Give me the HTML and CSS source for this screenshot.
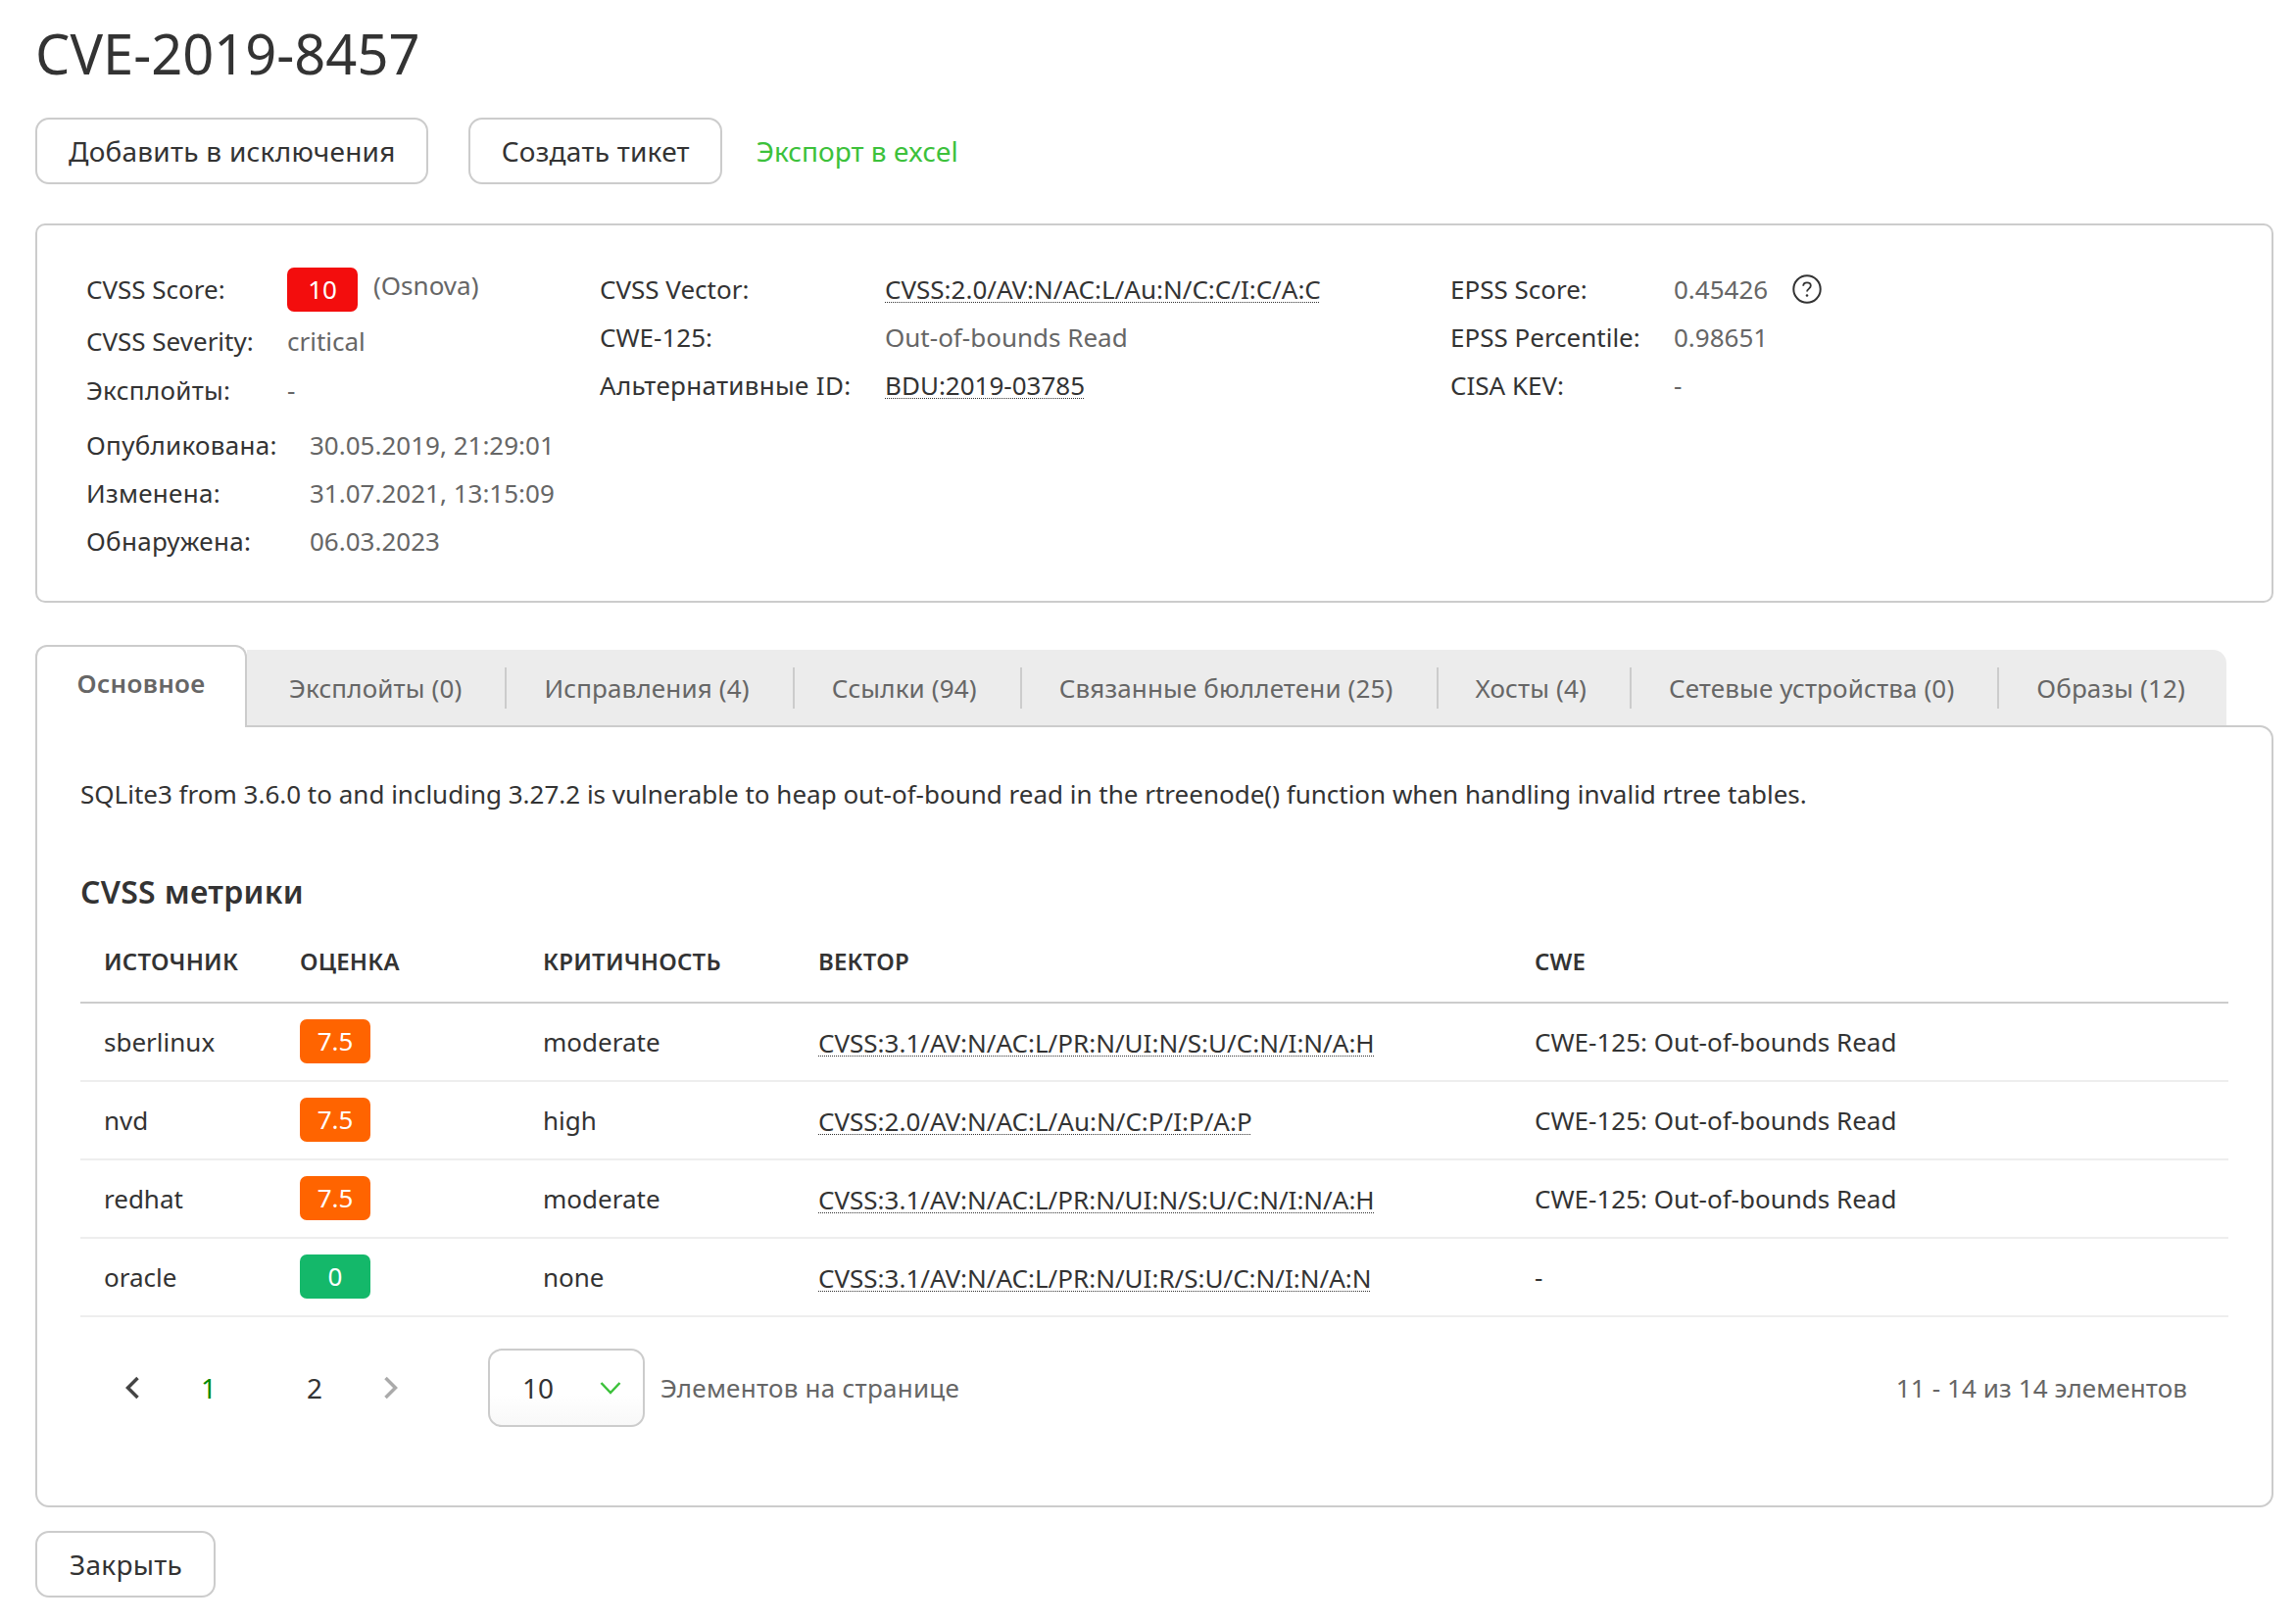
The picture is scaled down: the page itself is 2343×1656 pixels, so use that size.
FILE: index.html
```html
<!DOCTYPE html>
<html lang="ru">
<head>
    <meta charset="UTF-8">
    <title>CVE-2019-8457</title>
    <link rel="stylesheet" href="styles.css">
</head>
<body>
    <h1 class="page-title">CVE-2019-8457</h1>

    <div class="actions">
        <button class="btn">Добавить в исключения</button>
        <button class="btn">Создать тикет</button>
        <a class="export-link">Экспорт в excel</a>
    </div>

    <section class="info-panel">
        <div class="info-col info-col-left">
            <div class="info-grid score-grid">
                <span class="label">CVSS Score:</span>
                <span class="value score-value"><span class="badge badge-red">10</span><span class="source">(Osnova)</span></span>
                <span class="label">CVSS Severity:</span>
                <span class="value">critical</span>
                <span class="label cyr">Эксплойты:</span>
                <span class="value">-</span>
            </div>
            <div class="info-grid date-grid">
                <span class="label cyr">Опубликована:</span>
                <span class="value">30.05.2019, 21:29:01</span>
                <span class="label cyr">Изменена:</span>
                <span class="value">31.07.2021, 13:15:09</span>
                <span class="label cyr">Обнаружена:</span>
                <span class="value">06.03.2023</span>
            </div>
        </div>
        <div class="info-col info-col-mid">
            <div class="info-grid mid-grid">
                <span class="label">CVSS Vector:</span>
                <span class="value"><a class="link">CVSS:2.0/AV:N/AC:L/Au:N/C:C/I:C/A:C</a></span>
                <span class="label">CWE-125:</span>
                <span class="value">Out-of-bounds Read</span>
                <span class="label cyr">Альтернативные ID:</span>
                <span class="value"><a class="link">BDU:2019-03785</a></span>
            </div>
        </div>
        <div class="info-col info-col-right">
            <div class="info-grid epss-grid">
                <span class="label">EPSS Score:</span>
                <span class="value epss-value">0.45426
                    <svg class="help-icon" viewBox="0 0 30 30" width="30" height="30">
                        <circle cx="15" cy="15" r="13.7" fill="none" stroke="#333" stroke-width="2"/>
                        <path d="M11.200 11.800c0-2.200 1.600-3.500 3.800-3.500s3.800 1.300 3.800 3.300c0 3-3.800 3-3.800 6" fill="none" stroke="#333" stroke-width="1.800"/>
                        <circle cx="15" cy="21.500" r="1.300" fill="#333"/>
                    </svg>
                </span>
                <span class="label">EPSS Percentile:</span>
                <span class="value">0.98651</span>
                <span class="label">CISA KEV:</span>
                <span class="value">-</span>
            </div>
        </div>
    </section>

    <div class="tabs">
        <div class="tab tab-active">Основное</div>
        <div class="tab-bar">
            <div class="tab">Эксплойты (0)</div>
            <div class="tab">Исправления (4)</div>
            <div class="tab">Ссылки (94)</div>
            <div class="tab">Связанные бюллетени (25)</div>
            <div class="tab">Хосты (4)</div>
            <div class="tab">Сетевые устройства (0)</div>
            <div class="tab">Образы (12)</div>
        </div>
    </div>

    <section class="tab-panel">
        <p class="description">SQLite3 from 3.6.0 to and including 3.27.2 is vulnerable to heap out-of-bound read in the rtreenode() function when handling invalid rtree tables.</p>
        <h2 class="section-title">CVSS метрики</h2>

        <table class="metrics">
            <thead>
                <tr>
                    <th class="col-source">Источник</th>
                    <th class="col-score">Оценка</th>
                    <th class="col-severity">Критичность</th>
                    <th class="col-vector">Вектор</th>
                    <th>CWE</th>
                </tr>
            </thead>
            <tbody>
                <tr>
                    <td>sberlinux</td>
                    <td><span class="badge badge-orange">7.5</span></td>
                    <td>moderate</td>
                    <td><a class="link">CVSS:3.1/AV:N/AC:L/PR:N/UI:N/S:U/C:N/I:N/A:H</a></td>
                    <td>CWE-125: Out-of-bounds Read</td>
                </tr>
                <tr>
                    <td>nvd</td>
                    <td><span class="badge badge-orange">7.5</span></td>
                    <td>high</td>
                    <td><a class="link">CVSS:2.0/AV:N/AC:L/Au:N/C:P/I:P/A:P</a></td>
                    <td>CWE-125: Out-of-bounds Read</td>
                </tr>
                <tr>
                    <td>redhat</td>
                    <td><span class="badge badge-orange">7.5</span></td>
                    <td>moderate</td>
                    <td><a class="link">CVSS:3.1/AV:N/AC:L/PR:N/UI:N/S:U/C:N/I:N/A:H</a></td>
                    <td>CWE-125: Out-of-bounds Read</td>
                </tr>
                <tr>
                    <td>oracle</td>
                    <td><span class="badge badge-green">0</span></td>
                    <td>none</td>
                    <td><a class="link">CVSS:3.1/AV:N/AC:L/PR:N/UI:R/S:U/C:N/I:N/A:N</a></td>
                    <td>-</td>
                </tr>
            </tbody>
        </table>

        <div class="pager">
            <svg class="pager-arrow" viewBox="0 0 16 24" width="16" height="24"><path d="M13.500 2 3.500 12l10 10" fill="none" stroke="#444" stroke-width="3.500"/></svg>
            <span class="page-num page-current">1</span>
            <span class="page-num">2</span>
            <svg class="pager-arrow pager-next" viewBox="0 0 16 24" width="16" height="24"><path d="M2.500 2 12.500 12l-10 10" fill="none" stroke="#aaa" stroke-width="3.500"/></svg>
            <div class="page-size">
                <span>10</span>
                <svg viewBox="0 0 22 14" width="22" height="14"><path d="M1.500 2 11 12l9.500-10" fill="none" stroke="#3cc13b" stroke-width="2.500"/></svg>
            </div>
            <span class="pager-note">Элементов на странице</span>
            <span class="pager-total">11 - 14 из 14 элементов</span>
        </div>
    </section>

    <button class="btn btn-close">Закрыть</button>
</body>
</html>
```

FILE: styles.css
```css
body {
    font-family: "Noto Sans", Arial, sans-serif;
    font-size: 26px;
    color: #333;
    margin: 0;
    padding: 0 23px 26px 36px;
    background-color: #fff;
}

.page-title {
    font-size: 56px;
    font-weight: 400;
    line-height: 74px;
    margin: 17px 0 29px;
}

.actions {
    display: flex;
    align-items: center;
    height: 68px;
}

.btn {
    font-family: inherit;
    font-size: 28px;
    letter-spacing: 0.25px;
    color: #333;
    height: 68px;
    padding: 0 31px 0 32px;
    background: #fff;
    border: 2px solid #ccc;
    border-radius: 14px;
    margin-right: 41px;
}

.export-link {
    color: #3cc13b;
    font-size: 28px;
    margin-left: -6px;
}

.info-panel {
    display: flex;
    height: 387px;
    box-sizing: border-box;
    margin-top: 40px;
    padding: 42px 0 0 50px;
    border: 2px solid #ccc;
    border-radius: 10px;
}

.info-col-left {
    width: 524px;
}

.info-col-mid {
    width: 868px;
}

.info-grid {
    display: grid;
    align-items: center;
}

.label {
    white-space: nowrap;
}

.cyr {
    letter-spacing: 0.3px;
}

.value {
    color: #666;
    white-space: nowrap;
}

.score-grid {
    grid-template-columns: 205px 1fr;
    grid-template-rows: 46px 60px 40px;
}

.date-grid {
    grid-template-columns: 228px 1fr;
    grid-auto-rows: 49px;
    margin-top: 11px;
}

.mid-grid {
    grid-template-columns: 291px 1fr;
    grid-auto-rows: 49px;
    margin-top: -2px;
}

.epss-grid {
    grid-template-columns: 228px 1fr;
    grid-auto-rows: 49px;
    margin-top: -2px;
}

.score-value,
.epss-value {
    display: flex;
    align-items: center;
}

.source {
    margin: -8px 0 0 16px;
}

.help-icon {
    margin-left: 25px;
}

.link {
    color: #333;
    text-decoration: underline dotted 1px;
    text-underline-offset: 3px;
}

.badge {
    display: inline-block;
    width: 72px;
    height: 45px;
    line-height: 45px;
    text-align: center;
    vertical-align: middle;
    color: #fff;
    border-radius: 7px;
}

.badge-red {
    background-color: #f30d0d;
}

.badge-orange {
    background-color: #ff6400;
    margin-top: -2px;
}

.badge-green {
    background-color: #14b86a;
    margin-top: -2px;
}

.tabs {
    display: flex;
    align-items: flex-end;
    height: 82px;
    margin-top: 43px;
    margin-right: 48px;
}

.tab-active {
    flex-shrink: 0;
    box-sizing: border-box;
    width: 216px;
    height: 84px;
    margin-bottom: -2px;
    padding-top: 19px;
    text-align: center;
    font-size: 26px;
    font-weight: 600;
    letter-spacing: 0.3px;
    color: #666;
    background: #fff;
    border: 2px solid #ccc;
    border-bottom: none;
    border-radius: 12px 12px 0 0;
    position: relative;
    z-index: 1;
}

.tab-bar {
    flex: 1;
    min-width: 0;
    display: flex;
    align-items: center;
    height: 77px;
    box-sizing: border-box;
    background-color: #ececec;
    border-radius: 0 14px 0 0;
}

.tab-bar .tab {
    color: #666;
    white-space: nowrap;
    letter-spacing: 0.14px;
    padding: 0 44px 0 38px;
    border-left: 2px solid #ccc;
    line-height: 42px;
}

.tab-bar .tab:first-child {
    padding-left: 43px;
    border-left: none;
}

.tab-panel {
    box-sizing: border-box;
    height: 798px;
    padding: 48px 44px 0 44px;
    border: 2px solid #ccc;
    border-radius: 0 14px 14px 14px;
}

.description {
    margin: 0;
    line-height: 40px;
}

.section-title {
    font-size: 32px;
    font-weight: 600;
    letter-spacing: 0.3px;
    line-height: 44px;
    margin: 58px 0 0;
}

.metrics {
    width: 100%;
    table-layout: fixed;
    border-collapse: collapse;
    margin-top: 13px;
}

.metrics th {
    box-sizing: border-box;
    text-align: left;
    font-size: 24px;
    font-weight: 600;
    letter-spacing: 0.2px;
    text-transform: uppercase;
    height: 78px;
    padding: 0 24px 6px;
    border-bottom: 2px solid #ccc;
}

.metrics td {
    height: 78px;
    padding: 0 24px;
    border-bottom: 2px solid #eee;
    white-space: nowrap;
}

.metrics .link {
    display: inline-block;
    padding-top: 2px;
}

.col-source {
    width: 200px;
}

.col-score {
    width: 248px;
}

.col-severity {
    width: 281px;
}

.col-vector {
    width: 731px;
}

.pager {
    display: flex;
    align-items: center;
    height: 78px;
    margin-top: 33px;
    padding: 0 42px 0 45px;
}

.page-num {
    width: 108px;
    font-size: 28px;
    text-align: center;
}

.page-current {
    color: #008a00;
    margin-left: 16px;
}

.pager-next {
    margin-left: 16px;
    margin-right: 91px;
}

.page-size {
    display: flex;
    align-items: center;
    justify-content: space-between;
    box-sizing: border-box;
    width: 160px;
    height: 80px;
    padding: 0 22px 0 33px;
    font-size: 28px;
    background: linear-gradient(#fff 60%, #f8f8f8);
    border: 2px solid #ccc;
    border-radius: 14px;
}

.pager-note {
    color: #666;
    letter-spacing: 0.25px;
    margin-left: 16px;
}

.pager-total {
    color: #666;
    letter-spacing: 0.1px;
    margin-left: auto;
}

.btn-close {
    display: block;
    width: 184px;
    margin: 24px 0 0;
}
```
